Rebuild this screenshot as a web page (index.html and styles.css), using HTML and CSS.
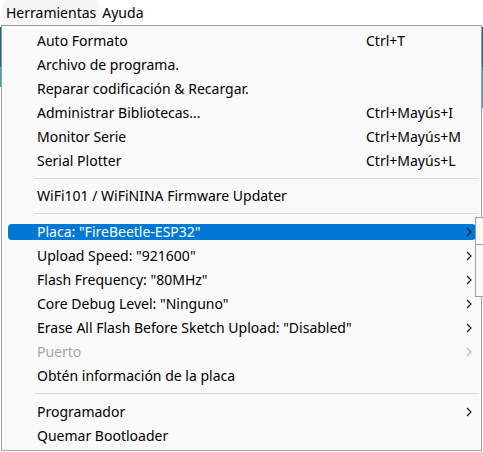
FILE: index.html
```html
<!DOCTYPE html>
<html lang="es">
<head>
<meta charset="utf-8">
<link rel="stylesheet" href="styles.css">
</head>
<body>
<div class="backdrop-left"></div>
<div class="backdrop-right"></div>
<div class="menubar">
  <span class="mb-item active">Herramientas</span>
  <span class="mb-item">Ayuda</span>
</div>
<div class="menu">
  <div class="item"><div class="hl"><span class="label">Auto Formato</span><span class="key">Ctrl+T</span><span></span></div></div>
  <div class="item"><div class="hl"><span class="label">Archivo de programa.</span><span class="key"></span><span></span></div></div>
  <div class="item"><div class="hl"><span class="label">Reparar codificación &amp; Recargar.</span><span class="key"></span><span></span></div></div>
  <div class="item"><div class="hl"><span class="label">Administrar Bibliotecas...</span><span class="key">Ctrl+Mayús+I</span><span></span></div></div>
  <div class="item"><div class="hl"><span class="label">Monitor Serie</span><span class="key">Ctrl+Mayús+M</span><span></span></div></div>
  <div class="item"><div class="hl"><span class="label">Serial Plotter</span><span class="key">Ctrl+Mayús+L</span><span></span></div></div>
  <div class="sep sep-short"></div>
  <div class="item"><div class="hl"><span class="label">WiFi101 / WiFiNINA Firmware Updater</span><span class="key"></span><span></span></div></div>
  <div class="sep"></div>
  <div class="item selected"><div class="hl"><span class="label">Placa: "FireBeetle-ESP32"</span><span class="key"></span><svg class="arrow" width="6" height="10" viewBox="0 0 6 10"><path d="M1 1l4 4-4 4" fill="none" stroke="currentColor" stroke-width="1.2"/></svg></div></div>
  <div class="item"><div class="hl"><span class="label">Upload Speed: "921600"</span><span class="key"></span><svg class="arrow" width="6" height="10" viewBox="0 0 6 10"><path d="M1 1l4 4-4 4" fill="none" stroke="currentColor" stroke-width="1.2"/></svg></div></div>
  <div class="item"><div class="hl"><span class="label">Flash Frequency: "80MHz"</span><span class="key"></span><svg class="arrow" width="6" height="10" viewBox="0 0 6 10"><path d="M1 1l4 4-4 4" fill="none" stroke="currentColor" stroke-width="1.2"/></svg></div></div>
  <div class="item"><div class="hl"><span class="label">Core Debug Level: "Ninguno"</span><span class="key"></span><svg class="arrow" width="6" height="10" viewBox="0 0 6 10"><path d="M1 1l4 4-4 4" fill="none" stroke="currentColor" stroke-width="1.2"/></svg></div></div>
  <div class="item"><div class="hl"><span class="label">Erase All Flash Before Sketch Upload: "Disabled"</span><span class="key"></span><svg class="arrow" width="6" height="10" viewBox="0 0 6 10"><path d="M1 1l4 4-4 4" fill="none" stroke="currentColor" stroke-width="1.2"/></svg></div></div>
  <div class="item disabled"><div class="hl"><span class="label">Puerto</span><span class="key"></span><svg class="arrow" width="6" height="10" viewBox="0 0 6 10"><path d="M1 1l4 4-4 4" fill="none" stroke="currentColor" stroke-width="1.2"/></svg></div></div>
  <div class="item"><div class="hl"><span class="label">Obtén información de la placa</span><span class="key"></span><span></span></div></div>
  <div class="sep"></div>
  <div class="item"><div class="hl"><span class="label">Programador</span><span class="key"></span><svg class="arrow" width="6" height="10" viewBox="0 0 6 10"><path d="M1 1l4 4-4 4" fill="none" stroke="currentColor" stroke-width="1.2"/></svg></div></div>
  <div class="item"><div class="hl"><span class="label">Quemar Bootloader</span><span class="key"></span><span></span></div></div>
</div>
<div class="submenu"><div class="sub-row"></div></div>
</body>
</html>
```
FILE: styles.css
```css
html, body {
  margin: 0;
  padding: 0;
  background: #ffffff;
}
body {
  width: 483px;
  height: 452px;
  overflow: hidden;
  position: relative;
  font-family: "Noto Sans", "Open Sans", sans-serif;
  font-size: 14px;
  color: #000;
}
.backdrop-left {
  position: absolute;
  left: 0;
  top: 27px;
  width: 1px;
  height: 60px;
  background: linear-gradient(#0b6e6e 0 40px, #22b0b0 40px);
}
.backdrop-right {
  position: absolute;
  right: 0;
  top: 27px;
  width: 1px;
  height: 81px;
  background: linear-gradient(#0b6e6e 0 40px, #22b0b0 40px);
}
.menubar {
  height: 25px;
  display: flex;
  align-items: stretch;
  padding-left: 3px;
}
.mb-item {
  display: flex;
  align-items: center;
  padding: 0 3px;
  line-height: 1;
}
.mb-item.active {
  background: #f5f5f5;
  border-radius: 4px 4px 0 0;
}
.menu {
  position: relative;
  margin-left: 1px;
  width: 479px;
  border: 1px solid #a0a0a0;
  background: #f9f9f9;
  padding: 3px 0 2px;
  z-index: 1;
}
.item {
  height: 24px;
  padding: 4px 5px 4px 6px;
  box-sizing: border-box;
}
.hl {
  height: 16px;
  border-radius: 4px;
  display: grid;
  grid-template-columns: 329px 1fr 10px;
  align-items: center;
  padding-left: 29px;
  white-space: nowrap;
}
.label, .key {
  line-height: 16px;
}
.arrow {
  display: block;
  color: #1a1a1a;
}
.selected .hl {
  background: #0078d4;
  color: #ffffff;
}
.selected .arrow {
  color: #1a1a1a;
}
.disabled .hl {
  color: #a6a6a6;
}
.disabled .arrow {
  color: #b8b8b8;
}
.sep {
  height: 12px;
  box-sizing: border-box;
  padding: 5px 2px 0 32px;
}
.sep-short {
  height: 11px;
}
.sep::before {
  content: "";
  display: block;
  height: 1px;
  background: #d9d9d9;
}
.submenu {
  position: absolute;
  left: 475px;
  top: 217px;
  width: 20px;
  height: 78px;
  border: 1px solid #a0a0a0;
  background: #f9f9f9;
  z-index: 2;
}
.sub-row {
  height: 26px;
  border-bottom: 1px solid #a0a0a0;
}
```
